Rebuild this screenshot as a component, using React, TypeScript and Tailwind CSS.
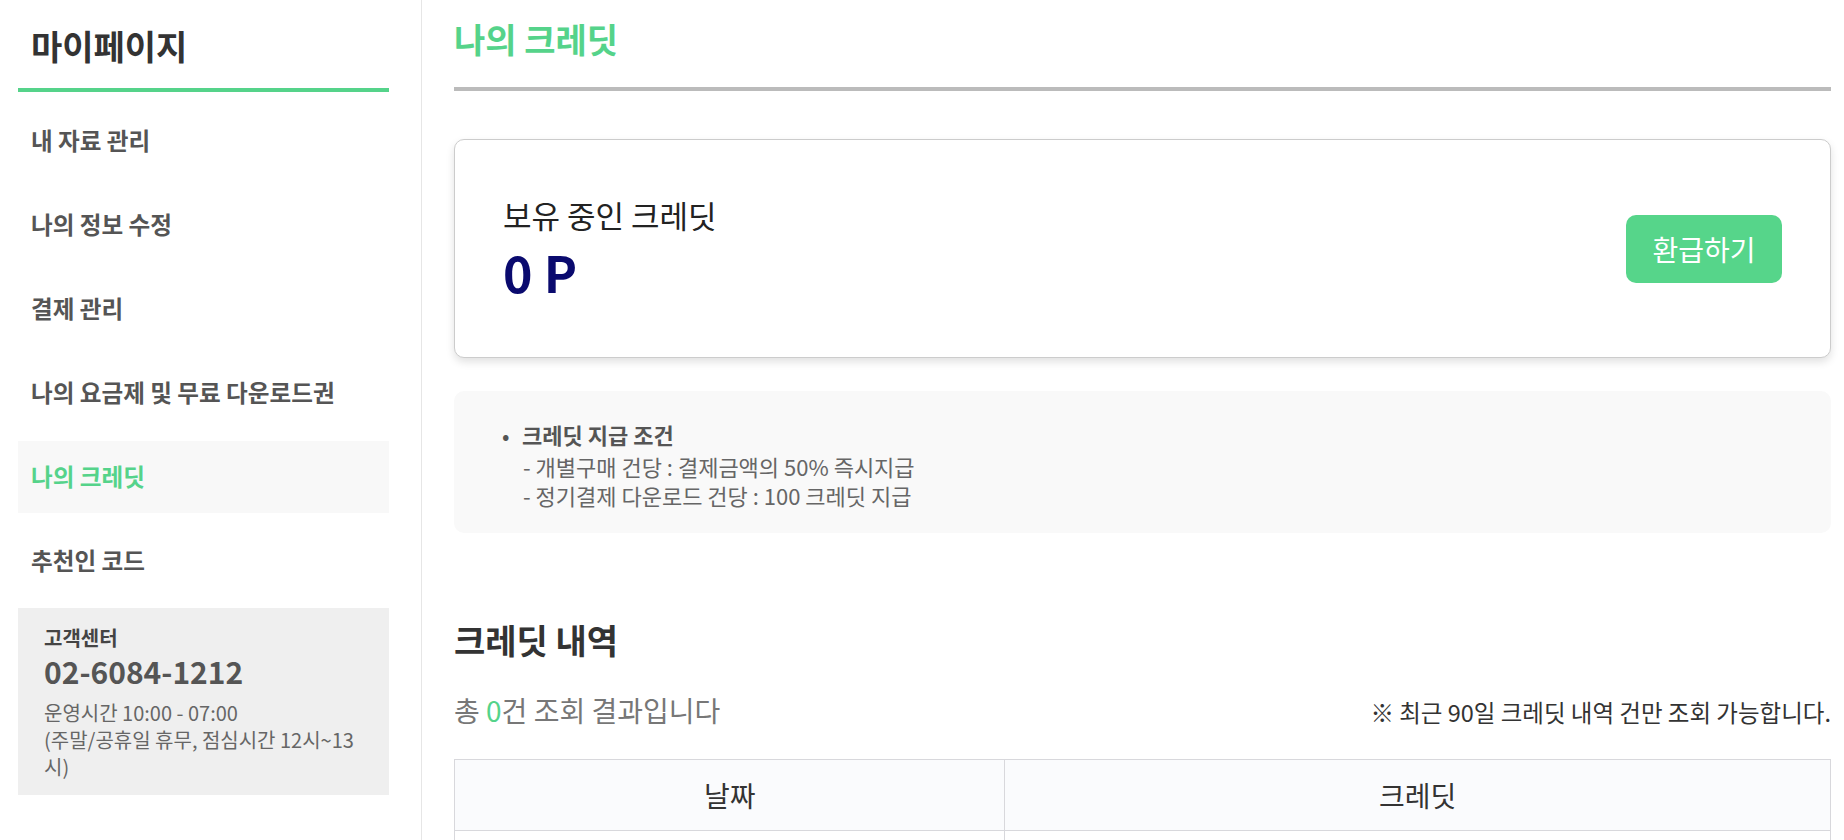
import React from "react";

const navItems = [
  "내 자료 관리",
  "나의 정보 수정",
  "결제 관리",
  "나의 요금제 및 무료 다운로드권",
  "나의 크레딧",
  "추천인 코드",
];

export default function App() {
  return (
    <div className="flex min-h-screen w-full bg-white font-['Noto_Sans_CJK_KR','Noto_Sans',sans-serif] text-[#333]">
      {/* Sidebar */}
      <aside className="w-[422px] shrink-0 border-r border-[#e6e6e6] pl-[18px] pr-[32px]">
        <div className="border-b-4 border-[#55d38a] pt-[22px] pb-[18px] pl-[13px]">
          <h1 className="text-[34px] font-bold leading-[48px] text-[#333]">마이페이지</h1>
        </div>
        <nav className="mt-[13px] flex flex-col gap-[12px]">
          {navItems.map((item) => {
            const active = item === "나의 크레딧";
            return (
              <div
                key={item}
                className={
                  active
                    ? "flex h-[72px] items-center bg-[#f8f8f8] pl-[13px] text-[23.6px] font-bold text-[#55d38a]"
                    : "flex h-[72px] items-center pl-[13px] text-[23.6px] font-bold text-[#555]"
                }
              >
                {item}
              </div>
            );
          })}
        </nav>
        <div className="mt-[11px] bg-[#efefef] pt-[16px] pb-[15px] pl-[26px] pr-[26px]">
          <div className="text-[20px] font-bold leading-[27px] text-[#444]">고객센터</div>
          <div className="text-[30px] font-bold leading-[40px] text-[#555]">02-6084-1212</div>
          <div className="mt-[8px] text-[20px] leading-[27px] text-[#666]">
            운영시간 10:00 - 07:00
            <br />
            (주말/공휴일 휴무, 점심시간 12시~13시)
          </div>
        </div>
      </aside>

      {/* Main */}
      <main className="min-w-0 flex-1 pl-[32px] pr-[13px]">
        <div className="border-b-4 border-[#bbbbbb] pt-[15px] pb-[24px]">
          <h2 className="text-[34px] font-bold leading-[48px] text-[#55d38a]">나의 크레딧</h2>
        </div>

        {/* Credit card */}
        <div className="mt-[48px] flex h-[219px] items-center justify-between rounded-[10px] border border-[#cccccc] bg-white px-[48px] shadow-[0_4px_8px_rgba(0,0,0,0.12)]">
          <div className="flex flex-col pb-[2px]">
            <div className="text-[31px] leading-[40px] text-[#222]">보유 중인 크레딧</div>
            <div className="mt-[6px] text-[50px] font-bold leading-[60px] text-[#0a0a6e]">0 P</div>
          </div>
          <button className="flex h-[68px] w-[156px] items-center justify-center rounded-[10px] bg-[#56d58a] text-[28px] text-white">
            환급하기
          </button>
        </div>

        {/* Info box */}
        <div className="mt-[33px] rounded-[10px] bg-[#f9f9f9] pt-[28px] pb-[23px] pl-[48px]">
          <div className="flex">
            <span className="w-[20px] text-[22px] leading-[30px] text-[#555]">•</span>
            <div className="flex flex-col">
              <div className="text-[22px] font-bold leading-[30px] text-[#555]">크레딧 지급 조건</div>
              <div className="mt-[3px] pl-[1px] text-[22px] leading-[29px] text-[#666]">- 개별구매 건당 : 결제금액의 50% 즉시지급</div>
              <div className="pl-[1px] text-[22px] leading-[29px] text-[#666]">- 정기결제 다운로드 건당 : 100 크레딧 지급</div>
            </div>
          </div>
        </div>

        {/* History */}
        <h3 className="mt-[83px] text-[34px] font-bold leading-[48px] text-[#333]">크레딧 내역</h3>
        <div className="mt-[27px] flex items-end justify-between">
          <div className="text-[28px] leading-[39px] text-[#777]">
            총 <span className="text-[#55d38a]">0</span>건 조회 결과입니다
          </div>
          <div className="text-[23.5px] leading-[36px] text-[#333]">※ 최근 90일 크레딧 내역 건만 조회 가능합니다.</div>
        </div>

        <table className="mt-[29px] w-full table-fixed border-collapse">
          <thead>
            <tr className="h-[71px] bg-[#fafbfd]">
              <th className="w-[40%] border border-[#d8d8dc] text-[28px] font-normal text-[#333]">날짜</th>
              <th className="border border-[#d8d8dc] text-[28px] font-normal text-[#333]">크레딧</th>
            </tr>
          </thead>
          <tbody>
            <tr className="h-[71px]">
              <td className="border border-[#d8d8dc]"></td>
              <td className="border border-[#d8d8dc]"></td>
            </tr>
          </tbody>
        </table>
      </main>
    </div>
  );
}
